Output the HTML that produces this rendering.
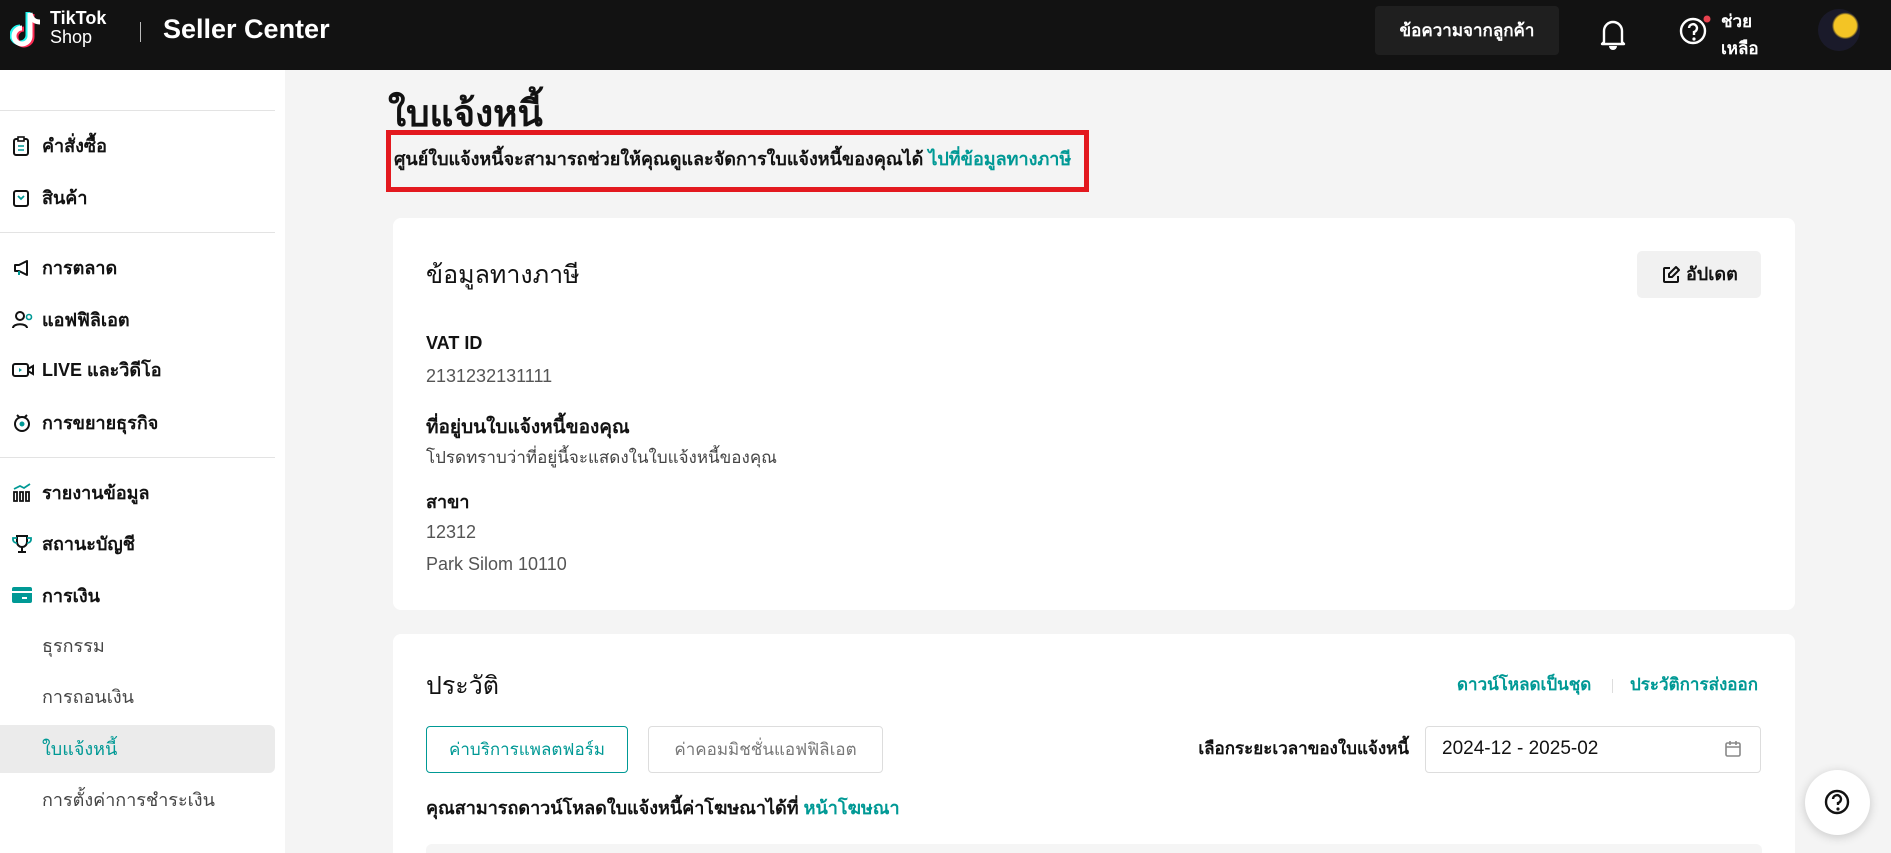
<!DOCTYPE html>
<html><head><meta charset="utf-8"><style>
*{box-sizing:border-box;margin:0;padding:0}
html{width:1891px;height:853px;overflow:hidden}
body{width:1891px;height:853px;overflow:hidden;background:#f4f4f4;font-family:"Liberation Sans","Noto Sans CJK SC",sans-serif;color:#121212;position:relative}
.a{position:absolute;white-space:nowrap}
.hdr{position:absolute;left:0;top:0;width:1891px;height:70px;background:#121212}
.side{position:absolute;left:0;top:70px;width:285px;height:783px;background:#fff}
.hr{position:absolute;left:0;width:275px;height:1px;background:#e3e3e3}
.si{position:absolute;left:42px;font-size:18px;line-height:20px;font-weight:600;color:#121212}
.sub{position:absolute;left:42px;font-size:18px;line-height:20px;color:#444}
.ic{position:absolute;left:12px}
.card{position:absolute;background:#fff;border-radius:8px}
.teal{color:#009995}
</style></head><body>
<div class="hdr">
 <svg class="a" style="left:10px;top:10px" width="34" height="40" viewBox="0 0 34 40">
  <path d="M20 3v23a8 8 0 1 1-8-8" fill="none" stroke="#25f4ee" stroke-width="5" transform="translate(-2,-1)"/>
  <path d="M20 3v23a8 8 0 1 1-8-8" fill="none" stroke="#fe2c55" stroke-width="5" transform="translate(2,1)"/>
  <path d="M20 3v23a8 8 0 1 1-8-8M20 3c1 6 5 9 10 9" fill="none" stroke="#fff" stroke-width="5"/>
 </svg>
 <div class="a" style="left:50px;top:9px;color:#fff;font-weight:700;font-size:18px;line-height:19px">TikTok</div>
 <div class="a" style="left:50px;top:28px;color:#fff;font-size:18px;line-height:19px">Shop</div>
 <div class="a" style="left:140px;top:22px;width:1px;height:20px;background:#bbb"></div>
 <div class="a" style="left:163px;top:14px;color:#fff;font-size:27px;font-weight:600">Seller Center</div>
 <div class="a" style="left:1375px;top:6px;width:184px;height:49px;background:#1f1f1f;border-radius:4px;color:#fff;font-size:17px;font-weight:600;text-align:center;line-height:49px">ข้อความจากลูกค้า</div>
 <svg class="a" style="left:1598px;top:17px" width="30" height="34" viewBox="0 0 30 34"><path d="M6 25V14a9 9 0 0 1 18 0v11l2 2H4z" fill="none" stroke="#fff" stroke-width="2.4" stroke-linejoin="round"/><path d="M11 29a4 4 0 0 0 8 0z" fill="#fff"/></svg>
 <svg class="a" style="left:1678px;top:14px" width="34" height="34" viewBox="0 0 34 34"><circle cx="15" cy="17" r="12" fill="none" stroke="#fff" stroke-width="2.4"/><path d="M11 14a4 4 0 1 1 5 4v3" fill="none" stroke="#fff" stroke-width="2.4"/><circle cx="16" cy="25" r="1.6" fill="#fff"/><circle cx="29" cy="5" r="3.5" fill="#e8424f"/></svg>
 <div class="a" style="left:1721px;top:8px;color:#fff;font-size:17px;font-weight:600;line-height:27px">ช่วย<br>เหลือ</div>
 <div class="a" style="left:1818px;top:9px;width:42px;height:42px;border-radius:50%;background:radial-gradient(circle at 65% 40%,#f3c425 0 30%,#1a1a2a 36%)"></div>
</div>
<div class="side">
 <div class="hr" style="top:40px"></div>
 <svg class="ic" style="top:66px" width="18" height="20" viewBox="0 0 18 20"><rect x="2" y="3" width="14" height="16" rx="2" fill="none" stroke="#121212" stroke-width="2"/><rect x="6" y="1" width="6" height="4" fill="#fff" stroke="#121212" stroke-width="1.6"/><path d="M6 10h6M6 14h6" stroke="#009995" stroke-width="1.6"/></svg>
 <div class="si" style="top:66px">คำสั่งซื้อ</div>
 <svg class="ic" style="top:118px" width="18" height="20" viewBox="0 0 18 20"><rect x="2" y="3" width="14" height="15" rx="2" fill="none" stroke="#121212" stroke-width="2"/><path d="M6 8l3 3 3-3" fill="none" stroke="#009995" stroke-width="1.8"/></svg>
 <div class="si" style="top:118px">สินค้า</div>
 <div class="hr" style="top:162px"></div>
 <svg class="ic" style="top:188px" width="20" height="20" viewBox="0 0 20 20"><path d="M3 7h4l8-4v14l-8-4H3z" fill="none" stroke="#121212" stroke-width="2" stroke-linejoin="round"/><path d="M7 13v4" stroke="#009995" stroke-width="2"/></svg>
 <div class="si" style="top:188px">การตลาด</div>
 <svg class="ic" style="top:240px" width="22" height="20" viewBox="0 0 22 20"><circle cx="8" cy="6" r="4" fill="none" stroke="#121212" stroke-width="2"/><path d="M1 18c0-5 14-5 14 0" fill="none" stroke="#121212" stroke-width="2"/><circle cx="17" cy="7" r="2.5" fill="none" stroke="#009995" stroke-width="1.6"/></svg>
 <div class="si" style="top:240px">แอฟฟิลิเอต</div>
 <svg class="ic" style="top:290px" width="22" height="20" viewBox="0 0 22 20"><rect x="1" y="4" width="15" height="12" rx="2" fill="none" stroke="#121212" stroke-width="2"/><path d="M16 9l5-3v8l-5-3" fill="none" stroke="#121212" stroke-width="2"/><path d="M7 8l3 2-3 2z" fill="#009995"/></svg>
 <div class="si" style="top:290px">LIVE และวิดีโอ</div>
 <svg class="ic" style="top:343px" width="20" height="20" viewBox="0 0 20 20"><circle cx="10" cy="11" r="7" fill="none" stroke="#121212" stroke-width="2"/><path d="M5 2l3 3M15 2l-3 3" stroke="#121212" stroke-width="2"/><circle cx="10" cy="11" r="2.5" fill="#009995"/></svg>
 <div class="si" style="top:343px">การขยายธุรกิจ</div>
 <div class="hr" style="top:387px"></div>
 <svg class="ic" style="top:413px" width="20" height="20" viewBox="0 0 20 20"><path d="M2 9h3v9H2zM8 9h3v9H8zM14 9h3v9h-3z" fill="none" stroke="#121212" stroke-width="1.8"/><path d="M2 6l6-3 4 2 6-4" fill="none" stroke="#009995" stroke-width="1.8"/></svg>
 <div class="si" style="top:413px">รายงานข้อมูล</div>
 <svg class="ic" style="top:464px" width="20" height="20" viewBox="0 0 20 20"><path d="M5 2h10v6a5 5 0 0 1-10 0z" fill="none" stroke="#121212" stroke-width="2"/><path d="M10 13v4M6 18h8" stroke="#121212" stroke-width="2"/><path d="M5 4H1v2a4 4 0 0 0 4 3M15 4h4v2a4 4 0 0 1-4 3" fill="none" stroke="#009995" stroke-width="1.8"/></svg>
 <div class="si" style="top:464px">สถานะบัญชี</div>
 <svg class="ic" style="top:516px" width="20" height="18" viewBox="0 0 20 18"><rect x="0" y="1" width="20" height="16" rx="2" fill="#009995"/><rect x="0" y="5" width="20" height="2" fill="#fff"/><rect x="10" y="11" width="5" height="2" fill="#fff"/></svg>
 <div class="si" style="top:516px">การเงิน</div>
 <div class="sub" style="top:566px">ธุรกรรม</div>
 <div class="sub" style="top:617px">การถอนเงิน</div>
 <div class="a" style="left:0;top:655px;width:275px;height:48px;background:#ebebeb;border-radius:0 6px 6px 0"></div>
 <div class="sub teal" style="top:669px;color:#009995">ใบแจ้งหนี้</div>
 <div class="sub" style="top:720px">การตั้งค่าการชำระเงิน</div>
</div>

<div class="a" style="left:388px;top:92px;font-size:37px;line-height:44px;font-weight:600">ใบแจ้งหนี้</div>
<div class="a" style="left:386px;top:130px;width:703px;height:62px;border:5px solid #e3191f"></div>
<div class="a" style="left:394px;top:149px;font-size:18px;line-height:20px;font-weight:600">ศูนย์ใบแจ้งหนี้จะสามารถช่วยให้คุณดูและจัดการใบแจ้งหนี้ของคุณได้ <span class="teal">ไปที่ข้อมูลทางภาษี</span></div>

<div class="card" style="left:393px;top:218px;width:1402px;height:392px">
 <div class="a" style="left:33px;top:42px;font-size:25px;line-height:30px">ข้อมูลทางภาษี</div>
 <div class="a" style="left:1244px;top:33px;width:124px;height:47px;background:#f1f1f1;border-radius:5px"></div>
 <svg class="a" style="left:1268px;top:47px" width="20" height="20" viewBox="0 0 20 20"><path d="M9 3H4a1 1 0 0 0-1 1v12a1 1 0 0 0 1 1h12a1 1 0 0 0 1-1v-5" fill="none" stroke="#121212" stroke-width="2"/><path d="M15 2l3 3-7 7H8V9z" fill="none" stroke="#121212" stroke-width="2" stroke-linejoin="round"/></svg>
 <div class="a" style="left:1293px;top:45px;font-size:18px;line-height:22px;font-weight:600">อัปเดต</div>
 <div class="a" style="left:33px;top:114px;font-size:18px;line-height:22px;font-weight:600">VAT ID</div>
 <div class="a" style="left:33px;top:147px;font-size:18px;line-height:22px;color:#555">2131232131111</div>
 <div class="a" style="left:33px;top:199px;font-size:19px;line-height:22px;font-weight:600">ที่อยู่บนใบแจ้งหนี้ของคุณ</div>
 <div class="a" style="left:33px;top:230px;font-size:17px;line-height:20px;color:#444">โปรดทราบว่าที่อยู่นี้จะแสดงในใบแจ้งหนี้ของคุณ</div>
 <div class="a" style="left:33px;top:274px;font-size:18px;line-height:20px;font-weight:600">สาขา</div>
 <div class="a" style="left:33px;top:303px;font-size:18px;line-height:22px;color:#555">12312</div>
 <div class="a" style="left:33px;top:335px;font-size:18px;line-height:22px;color:#555">Park Silom 10110</div>
</div>

<div class="card" style="left:393px;top:634px;width:1402px;height:219px;border-radius:8px 8px 0 0">
 <div class="a" style="left:33px;top:37px;font-size:25px;line-height:30px">ประวัติ</div>
 <div class="a teal" style="left:1064px;top:41px;font-size:17px;line-height:20px;font-weight:600">ดาวน์โหลดเป็นชุด</div>
 <div class="a" style="left:1219px;top:45px;width:1px;height:14px;background:#ddd"></div>
 <div class="a teal" style="left:1237px;top:41px;font-size:17px;line-height:20px;font-weight:600">ประวัติการส่งออก</div>
 <div class="a teal" style="left:33px;top:92px;width:202px;height:47px;border:1px solid #009995;border-radius:4px;font-size:17px;text-align:center;line-height:45px">ค่าบริการแพลตฟอร์ม</div>
 <div class="a" style="left:255px;top:92px;width:235px;height:47px;border:1px solid #ddd;border-radius:4px;font-size:17px;text-align:center;line-height:45px;color:#777">ค่าคอมมิชชั่นแอฟฟิลิเอต</div>
 <div class="a" style="left:765px;top:104px;width:251px;text-align:right;font-size:17px;line-height:22px;font-weight:600">เลือกระยะเวลาของใบแจ้งหนี้</div>
 <div class="a" style="left:1032px;top:92px;width:336px;height:47px;border:1px solid #ddd;border-radius:4px"></div>
 <div class="a" style="left:1049px;top:104px;font-size:19px;line-height:22px">2024-12 - 2025-02</div>
 <svg class="a" style="left:1331px;top:106px" width="18" height="18" viewBox="0 0 18 18"><rect x="2" y="3" width="14" height="13" rx="1.5" fill="none" stroke="#888" stroke-width="1.6"/><path d="M2 7h14M6 1v4M12 1v4" stroke="#888" stroke-width="1.6"/></svg>
 <div class="a" style="left:33px;top:164px;font-size:18px;line-height:20px;font-weight:600">คุณสามารถดาวน์โหลดใบแจ้งหนี้ค่าโฆษณาได้ที่ <span class="teal">หน้าโฆษณา</span></div>
 <div class="a" style="left:33px;top:210px;width:1336px;height:9px;background:#f5f5f5;border-radius:6px 6px 0 0"></div>
</div>

<div class="a" style="left:1805px;top:770px;width:65px;height:65px;border-radius:50%;background:#fff;box-shadow:0 2px 10px rgba(0,0,0,.18)"></div>
<svg class="a" style="left:1823px;top:788px" width="28" height="28" viewBox="0 0 28 28"><circle cx="14" cy="14" r="11" fill="none" stroke="#121212" stroke-width="2.4"/><path d="M10 11a4 4 0 1 1 5 4v2" fill="none" stroke="#121212" stroke-width="2.4"/><circle cx="15" cy="21" r="1.6" fill="#121212"/></svg>
</body></html>
